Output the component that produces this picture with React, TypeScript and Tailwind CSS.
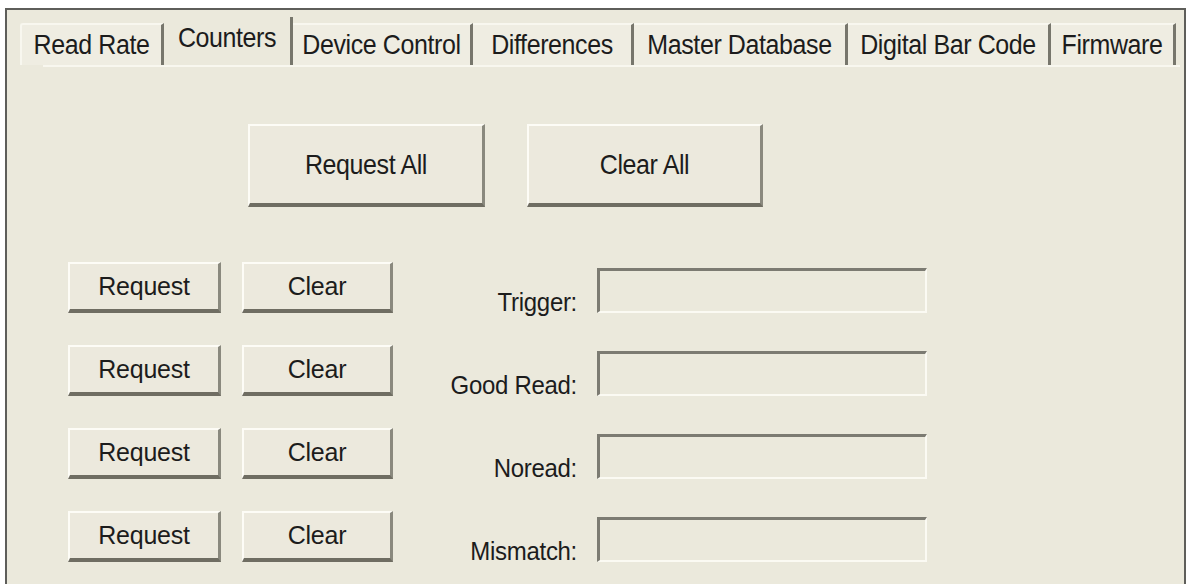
import React from "react";

const tabs = [
  { label: "Read Rate", w: "w-[144px]" },
  { label: "Counters", w: "w-[129px]", active: true },
  { label: "Device Control", w: "w-[180px]" },
  { label: "Differences", w: "w-[161px]" },
  { label: "Master Database", w: "w-[214px]" },
  { label: "Digital Bar Code", w: "w-[203px]" },
  { label: "Firmware", w: "w-[125px]" },
];

const rows = ["Trigger:", "Good Read:", "Noread:", "Mismatch:"];

function T({ children, small }: { children: React.ReactNode; small?: boolean }) {
  return (
    <span className={small ? "inline-block scale-y-[1.05]" : "inline-block scale-y-[1.1]"}>
      {children}
    </span>
  );
}

function Btn({
  children,
  cls,
  small,
}: {
  children: React.ReactNode;
  cls: string;
  small?: boolean;
}) {
  return (
    <div
      className={`${cls} flex items-center justify-center bg-[#ece9dd] border-t-2 border-l-2 border-t-[#fdfcf6] border-l-[#fdfcf6] border-b-[4px] border-r-[3px] border-b-[#6f6d62] border-r-[#8a897e] text-[#1c1c1c]`}
    >
      <T small={small}>{children}</T>
    </div>
  );
}

export default function App() {
  return (
    <div
      className="w-[1187px] h-[584px] bg-white pl-[5px] pt-[8px] overflow-hidden"
      style={{ fontFamily: '"Liberation Sans", Arial, sans-serif' }}
    >
      <div className="w-[1181px] h-[600px] border-l-2 border-t-2 border-r-2 border-[#5e5e5a] bg-[#ebe9dc] flex flex-col">
        {/* tab strip */}
        <div className="flex items-end h-[55px] pl-[13px]">
          {tabs.map((t) =>
            t.active ? (
              <div
                key={t.label}
                className={`${t.w} h-[48px] flex items-center justify-center pb-[6px] bg-[#ebe9dc] border-r-[3px] border-[#77766c] text-[25px] text-[#1c1c1c] tracking-[-0.4px]`}
              >
                <T>{t.label}</T>
              </div>
            ) : (
              <div
                key={t.label}
                className={`${t.w} h-[42px] flex items-center justify-center bg-[#efede2] border-t-2 border-[#f8f7ef] border-r-[3px] border-r-[#77766c] text-[25px] text-[#1c1c1c] tracking-[-0.4px] ${t.label === "Read Rate" ? "border-l-2 border-l-[#f8f7ef] border-r-0 rounded-tl-[3px]" : ""}`}
              >
                <T>{t.label}</T>
              </div>
            )
          )}
        </div>
        <div className="h-[2px] bg-[#f8f7ef] ml-[36px] mr-[4px]" />
        {/* content */}
        <div className="flex flex-col pl-[61px] pt-[57px]">
          <div className="flex gap-[42px] pl-[180px]">
            <Btn cls="w-[237px] h-[83px] text-[25px] tracking-[-0.4px]">Request All</Btn>
            <Btn cls="w-[236px] h-[83px] text-[25px] tracking-[-0.4px]">Clear All</Btn>
          </div>
          <div className="flex flex-col gap-[32px] mt-[55px]">
            {rows.map((r) => (
              <div key={r} className="flex items-start h-[51px]">
                <Btn small cls="w-[153px] h-[51px] text-[25px] tracking-[-0.2px]">Request</Btn>
                <Btn small cls="w-[151px] h-[51px] ml-[21px] text-[25px] tracking-[-0.2px]">Clear</Btn>
                <div className="w-[184px] self-end text-right text-[24px] text-[#1c1c1c] tracking-[-0.3px] leading-[28px] mb-[-4px]">
                  <T small>{r}</T>
                </div>
                <div className="ml-[20px] mt-[6px] w-[330px] h-[45px] bg-[#ebe9dc] border-t-[3px] border-l-[3px] border-[#7c7b72] border-b-2 border-r-2 border-b-[#fbfaf3] border-r-[#fbfaf3]" />
              </div>
            ))}
          </div>
        </div>
      </div>
    </div>
  );
}
